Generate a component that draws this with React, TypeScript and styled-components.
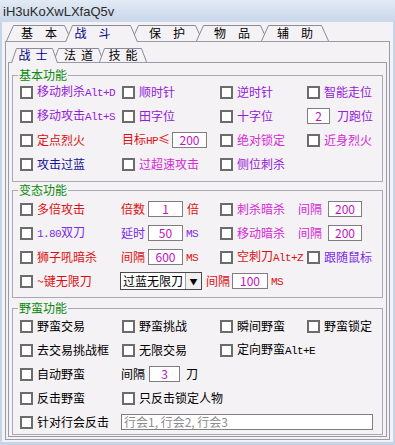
import React from 'react';
import styled, { createGlobalStyle } from 'styled-components';

const BG = '#f5f2f6';
const LINE = '#9a9aa8';
const PURPLE = '#9420d6';
const VIOLET = '#7a2ce6';
const MAGENTA = '#d42ad4';
const RED = '#dc1010';
const NAVY = '#14149a';
const DIGIT = '#c410c4';

const GlobalStyle = createGlobalStyle`
  html, body {
    margin: 0;
    padding: 0;
    background: ${BG};
  }
  body {
    font-family: "Noto Sans CJK SC", "Liberation Sans", sans-serif;
    font-size: 12px;
  }
`;

const Window = styled.div`
  width: 395px;
  height: 445px;
  display: flex;
  flex-direction: column;
  background: ${BG};
`;

const TitleBar = styled.div`
  height: 22px;
  flex-shrink: 0;
  padding-left: 3px;
  display: flex;
  align-items: center;
  background: linear-gradient(#e2eaf5, #c9d7ea);
  color: #2a2a2a;
  font-family: "Liberation Sans", sans-serif;
  font-size: 13px;
`;

const Frame = styled.div`
  flex: 1;
  display: flex;
  flex-direction: column;
  border: solid #c6d4e7;
  border-width: 0 2px 3px 2px;
  padding-top: 3px;
  padding-bottom: 2px;
`;

const TabStrip = styled.div<{ $h: number; $left: number }>`
  display: flex;
  height: ${p => p.$h}px;
  margin-left: ${p => p.$left}px;
  position: relative;
  z-index: 2;
`;

const TabItem = styled.div<{ $w: number; $overlap: number; $active?: boolean; $shift?: number }>`
  position: relative;
  width: ${p => p.$w}px;
  margin-left: -${p => p.$overlap}px;
  z-index: ${p => (p.$active ? 3 : 1)};
  display: flex;
  align-items: center;
  justify-content: center;
  padding-right: ${p => p.$shift || 0}px;
  box-sizing: border-box;
  color: ${p => (p.$active ? '#000088' : '#000')};
  &:first-child {
    margin-left: 0;
  }
`;

const TabOutline = styled.svg`
  position: absolute;
  left: 0;
  top: 0;
  overflow: visible;
`;

const TabText = styled.span<{ $gap: number }>`
  position: relative;
  line-height: 14px;
  word-spacing: ${p => p.$gap}px;
  white-space: pre;
`;

const MainPanel = styled.div`
  flex: 1;
  margin: 0 3px;
  border: 1px solid ${LINE};
  padding: 6px 2px 2px 2px;
  display: flex;
  flex-direction: column;
  position: relative;
  z-index: 1;
`;

const InnerPanel = styled.div`
  flex: 1;
  border: 1px solid ${LINE};
  padding: 12px 3px 1px 3px;
  display: flex;
  flex-direction: column;
  position: relative;
  z-index: 1;
`;

const Group = styled.div<{ $pt: number; $pb: number; $mb: number; $rows: number }>`
  position: relative;
  border: 1px solid #a9a9b6;
  padding: ${p => p.$pt}px 0 ${p => p.$pb}px 7px;
  margin-bottom: ${p => p.$mb}px;
  display: grid;
  grid-template-columns: 102px 98px 87px 1fr;
  grid-template-rows: repeat(${p => p.$rows}, 24px);
`;

const GroupTitle = styled.span`
  position: absolute;
  top: -8px;
  left: 5px;
  padding: 0 1px;
  background: ${BG};
  color: #0a8a0a;
  line-height: 14px;
`;

const Cell = styled.div<{ $span?: number; $gap?: number }>`
  display: flex;
  align-items: center;
  gap: ${p => (p.$gap !== undefined ? p.$gap : 4)}px;
  white-space: nowrap;
  grid-column: span ${p => p.$span || 1};
`;

const Box = styled.span`
  width: 13px;
  height: 13px;
  box-sizing: border-box;
  border: 2px solid #6c6c6c;
  background: #fff;
  flex-shrink: 0;
`;

const Label = styled.span<{ $c?: string; $ml?: number }>`
  color: ${p => p.$c || '#000'};
  line-height: 14px;
  margin-left: ${p => p.$ml || 0}px;
`;

const Mono = styled.span`
  font-family: "Liberation Mono", monospace;
  font-size: 11px;
  letter-spacing: -0.6px;
`;

const NumBox = styled.span<{ $w: number; $ml?: number }>`
  width: ${p => p.$w}px;
  height: 16px;
  box-sizing: border-box;
  margin-left: ${p => p.$ml || 0}px;
  border: 1px solid #7e7e7e;
  background: #fff;
  color: ${DIGIT};
  display: flex;
  align-items: center;
  justify-content: center;
  line-height: 14px;
  flex-shrink: 0;
`;

const TextBox = styled.span`
  width: 252px;
  height: 16px;
  box-sizing: border-box;
  margin-left: -1px;
  border: 1px solid #7e7e7e;
  background: #fff;
  color: #8c8c8c;
  padding-left: 2px;
  display: flex;
  align-items: center;
  line-height: 14px;
`;

const Select = styled.span`
  width: 82px;
  height: 18px;
  box-sizing: border-box;
  margin-left: -2px;
  border: 1px solid #4a4a4a;
  background: #fff;
  display: flex;
  align-items: stretch;
  flex-shrink: 0;
`;

const SelectText = styled.span`
  flex: 1;
  padding-left: 2px;
  display: flex;
  align-items: center;
  line-height: 14px;
  color: #000;
`;

const SelectArrow = styled.span`
  width: 15px;
  border-left: 1px solid #a0a0a0;
  background: #f0f0f0;
  display: flex;
  align-items: center;
  justify-content: center;
  font-size: 8px;
  color: #000;
`;

interface TabDef {
  text: string;
  w: number;
  active?: boolean;
  shift?: number;
}

const Tabs: React.FC<{ tabs: TabDef[]; h: number; slant: number; overlap: number; gap: number; left: number }> = ({ tabs, h, slant, overlap, gap, left }) => (
  <TabStrip $h={h} $left={left}>
    {tabs.map(t => {
      const bh = t.active ? h + 1 : h;
      return (
        <TabItem key={t.text} $w={t.w} $overlap={overlap} $active={t.active} $shift={t.shift}>
          <TabOutline width={t.w} height={bh}>
            <polyline
              points={`0.5,${bh} ${slant + 0.5},0.5 ${t.w - slant - 0.5},0.5 ${t.w - 0.5},${bh}`}
              fill={BG}
              stroke="#8a8a98"
              strokeWidth={1}
            />
          </TabOutline>
          <TabText $gap={gap}>{t.text}</TabText>
        </TabItem>
      );
    })}
  </TabStrip>
);

const Check: React.FC<{ c?: string; children: React.ReactNode; span?: number }> = ({ c, children, span }) => (
  <Cell $span={span}>
    <Box />
    <Label $c={c}>{children}</Label>
  </Cell>
);

const mainTabs: TabDef[] = [
  { text: '基 本', w: 66 },
  { text: '战 斗', w: 73, active: true, shift: 18 },
  { text: '保 护', w: 72 },
  { text: '物 品', w: 72 },
  { text: '辅 助', w: 68 },
];

const subTabs: TabDef[] = [
  { text: '战 士', w: 47, active: true, shift: 3 },
  { text: '法 道', w: 51 },
  { text: '技 能', w: 48 },
];

export default function App() {
  return (
    <>
      <GlobalStyle />
      <Window>
        <TitleBar>iH3uKoXwLXfaQ5v</TitleBar>
        <Frame>
          <Tabs tabs={mainTabs} h={16} slant={7} overlap={7} gap={9.3} left={4} />
          <MainPanel>
            <Tabs tabs={subTabs} h={14} slant={5} overlap={5} gap={2.3} left={3} />
            <InnerPanel>
              <Group $pt={4} $pb={5} $mb={8} $rows={4}>
                <GroupTitle>基本功能</GroupTitle>
                <Check c={PURPLE}>移动刺杀<Mono>Alt+D</Mono></Check>
                <Check c={PURPLE}>顺时针</Check>
                <Check c={PURPLE}>逆时针</Check>
                <Check c={PURPLE}>智能走位</Check>

                <Check c={PURPLE}>移动攻击<Mono>Alt+S</Mono></Check>
                <Check c={PURPLE}>田字位</Check>
                <Check c={PURPLE}>十字位</Check>
                <Cell>
                  <NumBox $w={23}>2</NumBox>
                  <Label $c={PURPLE} $ml={3}>刀跑位</Label>
                </Cell>

                <Check c={RED}>定点烈火</Check>
                <Cell>
                  <Label $c={RED}>目标<Mono>HP</Mono>≤</Label>
                  <NumBox $w={35} $ml={-2}>200</NumBox>
                </Cell>
                <Check c={MAGENTA}>绝对锁定</Check>
                <Check c={MAGENTA}>近身烈火</Check>

                <Check c={NAVY}>攻击过蓝</Check>
                <Check c={MAGENTA}>过超速攻击</Check>
                <Check c={PURPLE}>侧位刺杀</Check>
                <Cell />
              </Group>

              <Group $pt={6} $pb={4} $mb={10} $rows={4}>
                <GroupTitle>变态功能</GroupTitle>
                <Check c={RED}>多倍攻击</Check>
                <Cell $gap={3}>
                  <Label $c={RED} $ml={-1}>倍数</Label>
                  <NumBox $w={35}>1</NumBox>
                  <Label $c={RED} $ml={1}>倍</Label>
                </Cell>
                <Cell $span={2}>
                  <Box />
                  <Label $c={MAGENTA}>刺杀暗杀</Label>
                  <Label $c={MAGENTA} $ml={9}>间隔</Label>
                  <NumBox $w={34} $ml={2}>200</NumBox>
                </Cell>

                <Check c={VIOLET}><Mono>1.80</Mono>双刀</Check>
                <Cell $gap={3}>
                  <Label $c={VIOLET} $ml={-1}>延时</Label>
                  <NumBox $w={35}>50</NumBox>
                  <Label $c={VIOLET}><Mono>MS</Mono></Label>
                </Cell>
                <Cell $span={2}>
                  <Box />
                  <Label $c={MAGENTA}>移动暗杀</Label>
                  <Label $c={MAGENTA} $ml={9}>间隔</Label>
                  <NumBox $w={34} $ml={2}>200</NumBox>
                </Cell>

                <Check c={RED}>狮子吼暗杀</Check>
                <Cell $gap={3}>
                  <Label $c={RED} $ml={-1}>间隔</Label>
                  <NumBox $w={35}>600</NumBox>
                  <Label $c={RED}><Mono>MS</Mono></Label>
                </Cell>
                <Check c={RED}>空刺刀<Mono>Alt+Z</Mono></Check>
                <Check c={VIOLET}>跟随鼠标</Check>

                <Check c={RED}>~键无限刀</Check>
                <Cell $span={3}>
                  <Select>
                    <SelectText>过蓝无限刀</SelectText>
                    <SelectArrow>▼</SelectArrow>
                  </Select>
                  <Label $c={RED}>间隔</Label>
                  <NumBox $w={36} $ml={-2}>100</NumBox>
                  <Label $c={RED} $ml={-1}><Mono>MS</Mono></Label>
                </Cell>
              </Group>

              <Group $pt={5} $pb={0} $mb={0} $rows={5}>
                <GroupTitle>野蛮功能</GroupTitle>
                <Check>野蛮交易</Check>
                <Check>野蛮挑战</Check>
                <Check>瞬间野蛮</Check>
                <Check>野蛮锁定</Check>

                <Check>去交易挑战框</Check>
                <Check>无限交易</Check>
                <Check span={2}>定向野蛮<Mono>Alt+E</Mono></Check>

                <Check>自动野蛮</Check>
                <Cell $span={3} $gap={3}>
                  <Label $ml={-1}>间隔</Label>
                  <NumBox $w={31} $ml={1}>3</NumBox>
                  <Label $ml={3}>刀</Label>
                </Cell>

                <Check>反击野蛮</Check>
                <Check span={3}>只反击锁定人物</Check>

                <Check>针对行会反击</Check>
                <Cell $span={3}>
                  <TextBox>行会1, 行会2, 行会3</TextBox>
                </Cell>
              </Group>
            </InnerPanel>
          </MainPanel>
        </Frame>
      </Window>
    </>
  );
}
